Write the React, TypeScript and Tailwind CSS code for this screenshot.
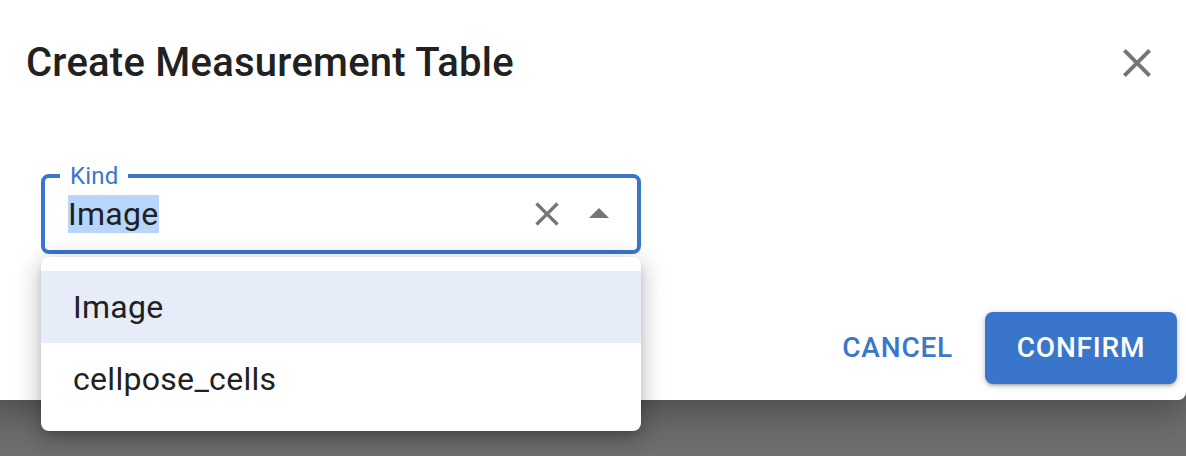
import React from 'react';

const CloseIcon = ({ size, className = '' }: { size: number; className?: string }) => (
  <svg width={size} height={size} viewBox="0 0 24 24" className={className} fill="currentColor">
    <path d="M19 6.41 17.59 5 12 10.59 6.41 5 5 6.41 10.59 12 5 17.59 6.41 19 12 13.41 17.59 19 19 17.59 13.41 12z" />
  </svg>
);

const ArrowUpIcon = ({ size }: { size: number }) => (
  <svg width={size} height={size} viewBox="0 0 24 24" fill="currentColor">
    <path d="M7 14l5-5 5 5z" />
  </svg>
);

export default function App() {
  const options = ['Image', 'cellpose_cells'];

  return (
    <div
      className="relative w-[1186px] h-[456px] overflow-hidden bg-[#6e6e6e]"
      style={{ fontFamily: 'Roboto, "Liberation Sans", sans-serif' }}
    >
      {/* Dialog */}
      <div className="-ml-[22px] w-[1208px] h-[400px] bg-white rounded-b-[8px] shadow-[0_14px_36px_rgba(0,0,0,0.3)] flex flex-col">
        <div className="flex items-center justify-between pt-[31px] pl-[48px] pr-[25px]">
          <h2 className="text-[40px] leading-[64px] font-medium text-[#212121] tracking-[0.25px]">
            Create Measurement Table
          </h2>
          <button className="w-[48px] h-[48px] flex items-center justify-center text-[#757575]">
            <CloseIcon size={48} />
          </button>
        </div>

        <div className="pl-[63px] pt-[79px]">
          <div className="relative w-[600px] h-[80px] border-[4px] border-[#3a76cc] rounded-[8px] flex items-center">
            <span className="absolute -top-[14px] left-[15px] px-[10px] bg-white text-[24px] leading-[24px] tracking-[0.2px] text-[#3a76cc]">
              Kind
            </span>
            <div className="pl-[23px] text-[32px] leading-[46px] tracking-[0.3px] text-[#212121]">
              <span className="bg-[#b8d6fb]">Image</span>
            </div>
            <div className="ml-auto flex items-center gap-[8px] pr-[14px] text-[#757575]">
              <CloseIcon size={40} />
              <ArrowUpIcon size={48} />
            </div>
          </div>
        </div>

        <div className="mt-auto flex items-center justify-end gap-[16px] pr-[9px] pb-[16px]">
          <button className="h-[72px] px-[16px] text-[28px] font-medium tracking-[0.8px] text-[#3a76cc] uppercase">
            Cancel
          </button>
          <button className="h-[72px] w-[192px] rounded-[8px] bg-[#3a75cc] text-[28px] font-medium tracking-[0.8px] text-white uppercase shadow-[0_3px_3px_-2px_rgba(0,0,0,0.2),0_2px_4px_0_rgba(0,0,0,0.14),0_1px_10px_0_rgba(0,0,0,0.12)]">
            Confirm
          </button>
        </div>
      </div>

      {/* Autocomplete listbox */}
      <div className="absolute left-[41px] top-[257px] w-[600px] bg-white rounded-[8px] pt-[14px] pb-[16px] shadow-[0_5px_10px_-3px_rgba(0,0,0,0.2),0_8px_20px_1px_rgba(0,0,0,0.14),0_3px_28px_2px_rgba(0,0,0,0.12)]">
        {options.map((opt, i) => (
          <div
            key={opt}
            className={`h-[72px] flex items-center pl-[32px] text-[32px] tracking-[0.3px] text-[#212121] ${
              i === 0 ? 'bg-[#e6edf8]' : ''
            }`}
          >
            {opt}
          </div>
        ))}
      </div>
    </div>
  );
}
